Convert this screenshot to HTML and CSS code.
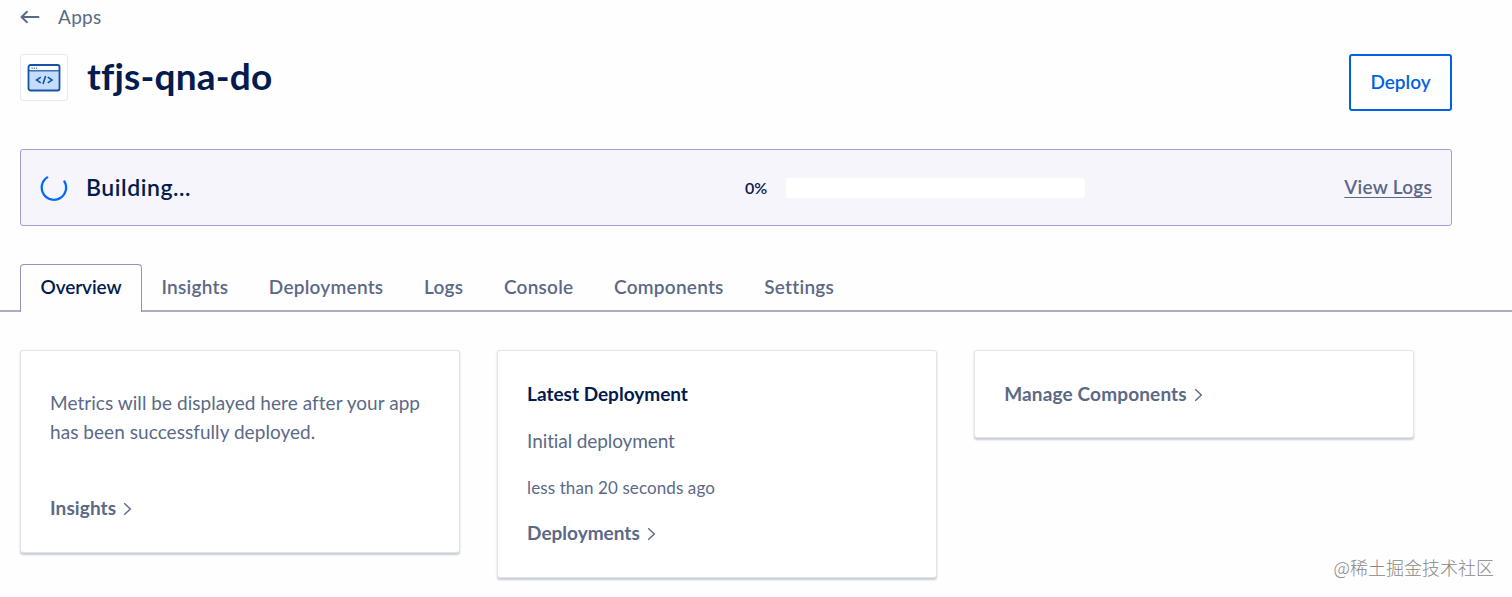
FILE: index.html
```
<!DOCTYPE html>
<html lang="en">

<head>
    <meta charset="UTF-8">
    <meta name="viewport" content="width=device-width, initial-scale=1.0">
    <title>tfjs-qna-do</title>
    <link rel="stylesheet" href="styles.css">
</head>

<body>
    <header>
        <a class="back-link" href="#">
            <svg class="back-arrow" width="20" height="14" viewBox="0 0 20 14">
                <path d="M18.5 7H2M7 1.8L1.5 7L7 12.2" fill="none" stroke="#5b6987" stroke-width="1.9" stroke-linecap="round" stroke-linejoin="round" />
            </svg>
            <span class="back-text">Apps</span>
        </a>
        <div class="title-row">
            <div class="app-icon">
                <svg width="34" height="28" viewBox="0 0 34 28">
                    <rect x="1.5" y="1" width="31" height="25.5" rx="2" fill="#c5dcfa" />
                    <path d="M2.5 2h29v4.5h-29z" fill="#fff" />
                    <path d="M1.5 6.8h31" stroke="#1553a6" stroke-width="1.2" />
                    <path d="M4.5 4.2h1.3M6.7 4.2h1.3M8.9 4.2h1.3" stroke="#1553a6" stroke-width="1" />
                    <rect x="1.5" y="1" width="31" height="25.5" rx="2" fill="none" stroke="#1553a6" stroke-width="1.8" />
                    <path d="M13.8 13.2L9.6 16L13.8 18.8M20.8 13.2L25 16L20.8 18.8M18.6 12L16 20" fill="none" stroke="#1553a6" stroke-width="1.6" />
                </svg>
            </div>
            <h1>tfjs-qna-do</h1>
            <button class="deploy-button">Deploy</button>
        </div>
    </header>

    <main>
        <section class="build-status">
            <svg class="spinner" width="28" height="28" viewBox="0 0 28 28">
                <path d="M7.2 3.4A12.2 12.2 0 1 0 24.4 7.4" fill="none" stroke="#0069ff" stroke-width="2.3" stroke-linecap="round" />
            </svg>
            <span class="status-text">Building...</span>
            <div class="progress">
                <span class="percent">0%</span>
                <div class="progress-bar"></div>
            </div>
            <a class="logs-link" href="#">View Logs</a>
        </section>

        <nav class="tabs">
            <a class="tab active" href="#">Overview</a>
            <a class="tab" href="#">Insights</a>
            <a class="tab" href="#">Deployments</a>
            <a class="tab" href="#">Logs</a>
            <a class="tab" href="#">Console</a>
            <a class="tab" href="#">Components</a>
            <a class="tab" href="#">Settings</a>
        </nav>

        <section class="card-container">
            <!-- Insights -->
            <div class="card insights-card">
                <p class="message">Metrics will be displayed here after your app<br>has been successfully deployed.</p>
                <a class="card-link insights-link" href="#">
                    <span>Insights</span>
                    <svg width="9" height="14" viewBox="0 0 9 14"><path d="M1.2 1.3L7.3 7L1.2 12.7" /></svg>
                </a>
            </div>

            <!-- Latest deployment -->
            <div class="card deployment-card">
                <h2>Latest Deployment</h2>
                <p class="deployment-name">Initial deployment</p>
                <p class="deployment-time">less than 20 seconds ago</p>
                <a class="card-link deployments-link" href="#">
                    <span>Deployments</span>
                    <svg width="9" height="14" viewBox="0 0 9 14"><path d="M1.2 1.3L7.3 7L1.2 12.7" /></svg>
                </a>
            </div>

            <!-- Components -->
            <div class="card components-card">
                <a class="card-link components-link" href="#">
                    <span>Manage Components</span>
                    <svg width="9" height="14" viewBox="0 0 9 14"><path d="M1.2 1.3L7.3 7L1.2 12.7" /></svg>
                </a>
            </div>
        </section>
    </main>

    <div class="watermark">@稀土掘金技术社区</div>
</body>

</html>
```

FILE: styles.css
```
* {
    box-sizing: border-box;
}

body {
    font-family: Lato, "Noto Sans CJK SC", sans-serif;
    font-size: 19px;
    font-variant-ligatures: none;
    color: #5b6987;
    margin: 0;
    height: 597px;
    background-color: #fefefe;
    overflow: hidden;
}

a {
    color: inherit;
    text-decoration: none;
}

h1, h2, p {
    margin: 0;
}

header {
    padding: 0 60px 0 20px;
}

.back-link {
    display: flex;
    align-items: center;
    height: 34px;
}

.back-text {
    margin-left: 18px;
    padding-bottom: 2px;
    letter-spacing: 0.3px;
}

.title-row {
    display: flex;
    align-items: flex-start;
    height: 77px;
    padding-top: 20px;
}

.app-icon {
    display: flex;
    align-items: center;
    justify-content: center;
    width: 48px;
    height: 47px;
    border: 1px solid #e5e8ed;
    border-radius: 3px;
    background-color: #fff;
}

h1 {
    margin-left: 19px;
    font-size: 37px;
    line-height: 44px;
    letter-spacing: 0.2px;
    color: #031b4e;
}

.deploy-button {
    width: 103px;
    height: 57px;
    margin-left: auto;
    padding: 0 0 2px;
    border: 2px solid #0062e3;
    border-radius: 3px;
    background-color: #fff;
    color: #0062e3;
    font-family: inherit;
    font-size: 19px;
    font-weight: 600;
    cursor: pointer;
}

.build-status {
    display: flex;
    align-items: center;
    height: 77px;
    margin: 38px 60px 0 20px;
    padding: 0 19px;
    border: 1.5px solid #a99be0;
    border-radius: 3px;
    background-color: #f6f5fc;
}

.status-text {
    width: 659px;
    margin-left: 18px;
    padding-bottom: 2px;
    font-size: 23px;
    font-weight: 600;
    letter-spacing: 0.55px;
    color: #031b4e;
}

.progress {
    display: flex;
    align-items: center;
    gap: 18px;
}

.percent {
    width: 23px;
    font-size: 16px;
    font-weight: 600;
    color: #031b4e;
}

.progress-bar {
    width: 299px;
    height: 20px;
    border-radius: 3px;
    background-color: #fff;
}

.logs-link {
    margin-left: auto;
    padding-bottom: 2px;
    font-weight: 600;
    letter-spacing: 0.25px;
    text-decoration: underline;
    text-decoration-thickness: 1px;
    text-underline-offset: 3px;
}

.tabs {
    display: flex;
    height: 48px;
    margin-top: 38px;
    padding-left: 20px;
    background: linear-gradient(#b0aac8, #b0aac8) bottom / 100% 2px no-repeat;
}

.tab {
    height: 48px;
    padding-left: 20px;
    padding-right: 20.6px;
    line-height: 46px;
    font-weight: 600;
    letter-spacing: 0.25px;
    white-space: nowrap;
}

.tab.active {
    width: 121.5px;
    padding-left: 19.5px;
    padding-right: 0;
    border: 1px solid #9890bd;
    border-bottom: none;
    border-radius: 4px 4px 0 0;
    background-color: #fefefe;
    color: #031b4e;
    line-height: 44px;
    letter-spacing: -0.1px;
}

.card-container {
    display: flex;
    align-items: flex-start;
    gap: 37.5px;
    padding: 38px 20px 0;
}

.card {
    width: 439.6px;
    padding: 0 29px;
    border: 1px solid #e3e5eb;
    border-radius: 3px;
    background-color: #fff;
    box-shadow: 0 1.5px 2px rgba(3, 27, 78, 0.22);
}

.insights-card {
    height: 203px;
    padding-top: 37px;
}

.message {
    line-height: 29px;
    letter-spacing: 0.05px;
    white-space: nowrap;
}

.card-link {
    display: flex;
    align-items: center;
    gap: 7px;
    height: 28px;
    font-weight: 700;
}

.card-link svg {
    margin-top: 4px;
    fill: none;
    stroke: #5b6987;
    stroke-width: 1.4;
}

.insights-link {
    margin-top: 47px;
    letter-spacing: 0.1px;
}

.deployment-card {
    height: 228px;
    padding-top: 29px;
}

h2 {
    font-size: 19px;
    line-height: 28px;
    color: #031b4e;
}

.deployment-name {
    margin-top: 19px;
    line-height: 28px;
    letter-spacing: -0.1px;
}

.deployment-time {
    margin-top: 19px;
    font-size: 17px;
    line-height: 28px;
    letter-spacing: 0.1px;
}

.deployments-link {
    margin-top: 16px;
}

.components-card {
    height: 88px;
    padding-top: 28px;
}

.components-link {
    letter-spacing: 0.15px;
}

.watermark {
    position: absolute;
    right: 18px;
    bottom: 16px;
    font-family: "Noto Sans CJK SC", sans-serif;
    font-size: 18px;
    font-weight: 300;
    line-height: 28px;
    color: #888;
}
```
